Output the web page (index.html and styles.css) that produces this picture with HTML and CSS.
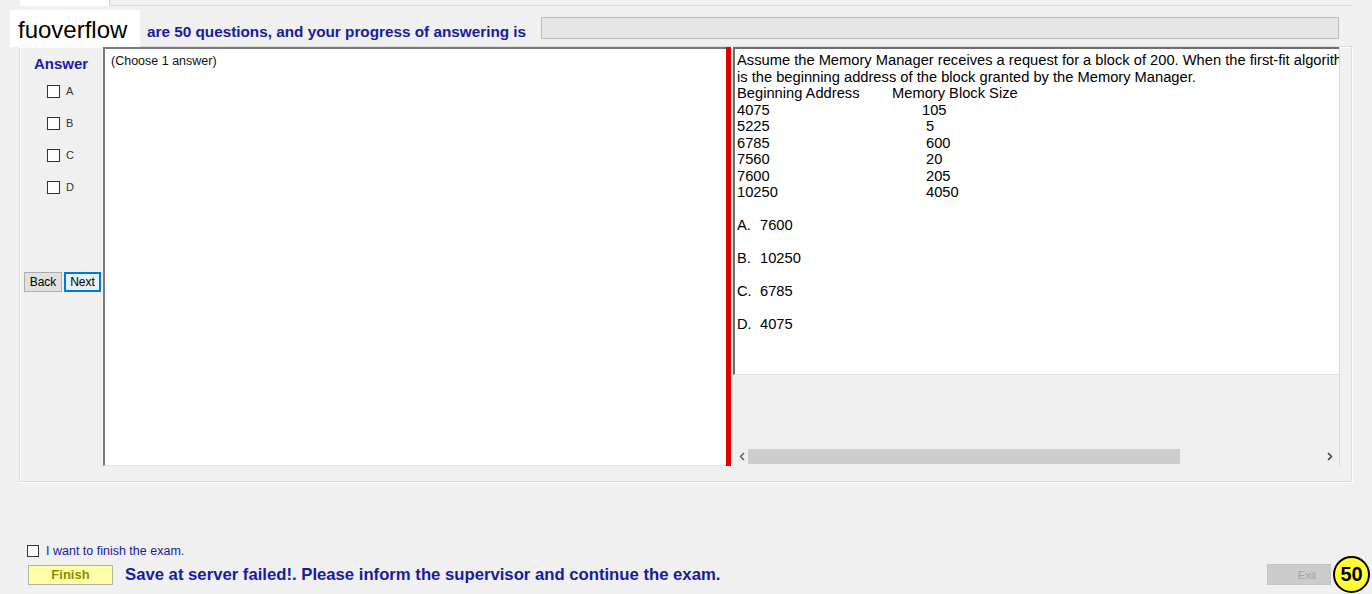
FILE: index.html
```html
<!DOCTYPE html>
<html lang="en">
<head>
  <meta charset="UTF-8">
  <title>Exam</title>
  <link rel="stylesheet" href="styles.css">
</head>
<body>
  <div class="tabstrip">
    <div class="tab"></div>
    <div class="tabline"></div>
  </div>

  <div class="logo">fuoverflow</div>

  <div class="topbar">
    <div class="heading">are 50 questions, and your progress of answering is</div>
    <div class="progress"></div>
  </div>

  <div class="group">
    <div class="answers">
      <div class="answers-title">Answer</div>
      <label class="opt"><span class="box"></span>A</label>
      <label class="opt"><span class="box"></span>B</label>
      <label class="opt"><span class="box"></span>C</label>
      <label class="opt"><span class="box"></span>D</label>
      <div class="nav">
        <button class="btn">Back</button>
        <button class="btn btn-focus">Next</button>
      </div>
    </div>

    <div class="choices">(Choose 1 answer)</div>
    <div class="divider"></div>

    <div class="question">
      <div class="qtext">
        <div class="line">Assume the Memory Manager receives a request for a block of 200. When the first-fit algorithm is used, what</div>
        <div class="line">is the beginning address of the block granted by the Memory Manager.</div>
        <div class="mem-row mem-head"><span class="addr">Beginning Address</span><span>Memory Block Size</span></div>
        <div class="mem-row"><span class="addr shift">4075</span><span>105</span></div>
        <div class="mem-row"><span class="addr">5225</span><span>5</span></div>
        <div class="mem-row"><span class="addr">6785</span><span>600</span></div>
        <div class="mem-row"><span class="addr">7560</span><span>20</span></div>
        <div class="mem-row"><span class="addr">7600</span><span>205</span></div>
        <div class="mem-row"><span class="addr">10250</span><span>4050</span></div>
        <div class="blank"></div>
        <p class="choice"><span class="letter">A.</span>7600</p>
        <p class="choice"><span class="letter">B.</span>10250</p>
        <p class="choice"><span class="letter">C.</span>6785</p>
        <p class="choice"><span class="letter">D.</span>4075</p>
      </div>
      <div class="qgap"></div>
      <div class="hscroll">
        <svg class="arrow" width="6" height="9" viewBox="0 0 6 9"><path d="M5 1 L1.5 4.5 L5 8" fill="none" stroke="#606060" stroke-width="1.5"/></svg>
        <div class="track"><div class="thumb"></div></div>
        <svg class="arrow" width="6" height="9" viewBox="0 0 6 9"><path d="M1 1 L4.5 4.5 L1 8" fill="none" stroke="#404040" stroke-width="1.5"/></svg>
      </div>
    </div>
  </div>

  <div class="footer">
    <label class="finish-check"><span class="box small"></span>I want to finish the exam.</label>
    <div class="footer-row">
      <button class="finish">Finish</button>
      <div class="message">Save at server failed!. Please inform the supervisor and continue the exam.</div>
      <button class="exit">Exit</button>
      <div class="count">50</div>
    </div>
  </div>
</body>
</html>
```

FILE: styles.css
```css
body {
  margin: 0;
  width: 1372px;
  height: 594px;
  overflow: hidden;
  position: relative;
  background-color: #f0f0f0;
  font-family: "Liberation Sans", Arial, sans-serif;
  color: #000;
}

.tabstrip {
  display: flex;
  height: 6px;
}

.tab {
  margin-left: 20px;
  width: 89px;
  background-color: #fff;
  border-right: 1px solid #d4d4d4;
}

.tabline {
  flex: 1;
  margin-right: 20px;
  border-bottom: 1px solid #dadada;
}

/* watermark over the top-left corner */
.logo {
  position: absolute;
  left: 10px;
  top: 10px;
  width: 130px;
  height: 37px;
  background-color: #fff;
  font-size: 24px;
  line-height: 40px;
  padding-left: 8px;
  box-sizing: border-box;
  color: #000;
}

.topbar {
  display: flex;
  justify-content: space-between;
  align-items: flex-start;
  height: 40px;
  padding: 11px 33px 0 147px;
  box-sizing: border-box;
}

.heading {
  font-size: 15.3px;
  font-weight: bold;
  color: #1a1a9c;
  line-height: 22px;
  padding-top: 4px;
  white-space: nowrap;
}

.progress {
  flex: 0 0 798px;
  height: 22px;
  box-sizing: border-box;
  background-color: #e6e6e6;
  border: 1px solid #bcbcbc;
}

.group {
  display: flex;
  margin: 0 20px 0 19px;
  height: 436px;
  box-sizing: border-box;
  border: 1px solid #dcdcdc;
  box-shadow: inset 1px 1px #fff, 1px 1px #fff;
  padding: 0 11px 15px 0;
}

.answers {
  width: 83px;
  flex: none;
  padding: 8px 0 0 4px;
  box-sizing: border-box;
}

.answers-title {
  font-size: 15px;
  font-weight: bold;
  color: #1a1aa8;
  line-height: 17px;
  padding-left: 10px;
  margin-bottom: 3px;
}

.opt {
  display: flex;
  align-items: center;
  height: 32px;
  padding-left: 23px;
  font-size: 11px;
  color: #333;
}

.box {
  display: inline-block;
  width: 11px;
  height: 11px;
  border: 1px solid #333;
  background-color: #fff;
  margin-right: 6px;
}

.nav {
  display: flex;
  gap: 2px;
  margin-top: 69px;
}

.btn {
  width: 38px;
  height: 20px;
  padding: 0;
  font-family: "Liberation Sans", Arial, sans-serif;
  font-size: 12px;
  color: #000;
  background-color: #e1e1e1;
  border: 1px solid #adadad;
}

.btn-focus {
  width: 37px;
  background-color: #e5f1fb;
  border: 2px solid #0078d7;
}

.choices {
  width: 623px;
  flex: none;
  box-sizing: border-box;
  background-color: #fff;
  border-top: 2px solid #7a7a7a;
  border-left: 2px solid #7a7a7a;
  border-bottom: 1px solid #e3e3e3;
  padding: 5px 0 0 6px;
  font-size: 12.5px;
  line-height: 15px;
  color: #111;
}

.divider {
  width: 5px;
  flex: none;
  background-color: #e00000;
  margin-right: 2px;
}

.question {
  flex: 1;
  display: flex;
  flex-direction: column;
  border-right: 1px solid #dadada;
  min-width: 0;
}

.qtext {
  height: 328px;
  box-sizing: border-box;
  background-color: #fff;
  border-top: 2px solid #6e6e6e;
  border-left: 2px solid #6e6e6e;
  border-bottom: 1px solid #dedede;
  padding: 3px 0 0 2px;
  font-size: 14.7px;
  line-height: 16.5px;
  white-space: nowrap;
  overflow: hidden;
}

.mem-row {
  display: flex;
}

.mem-row .addr {
  width: 189px;
}

.mem-row .shift {
  width: 185px;
}

.mem-head .addr {
  width: 155px;
}

.blank {
  height: 16.5px;
}

.choice {
  margin: 0 0 16.5px;
}

.letter {
  display: inline-block;
  width: 23px;
}

.qgap {
  flex: 1;
}

.hscroll {
  display: flex;
  align-items: center;
  height: 17px;
  margin-bottom: 1px;
  padding: 0 6px 0 6px;
  background-color: #f0f0f0;
}

.track {
  flex: 1;
  height: 15px;
  margin: 0 8px 0 3px;
}

.thumb {
  width: 432px;
  height: 15px;
  background-color: #cdcdcd;
}

.footer {
  padding: 62px 2px 0 27px;
}

.finish-check {
  display: flex;
  align-items: center;
  height: 13px;
  font-size: 12.5px;
  color: #1a1aa0;
}

.box.small {
  width: 10px;
  height: 10px;
  margin-right: 7px;
}

.footer-row {
  display: flex;
  align-items: center;
  margin-top: -1px;
}

.finish {
  margin-left: 1px;
  width: 85px;
  height: 20px;
  padding: 0;
  background-color: #ffffa8;
  border: 1px solid #b4b4a0;
  font-family: "Liberation Sans", Arial, sans-serif;
  font-size: 13px;
  font-weight: bold;
  color: #8c8c00;
}

.message {
  margin-left: 12px;
  flex: 1;
  font-size: 16.7px;
  font-weight: bold;
  color: #1a1aa0;
}

.exit {
  width: 64px;
  height: 21px;
  padding: 0 0 0 16px;
  background-color: #cccccc;
  border: 1px solid #c4c4c4;
  font-family: "Liberation Sans", Arial, sans-serif;
  font-size: 11px;
  color: #a6a6a6;
}

.count {
  width: 37px;
  height: 37px;
  margin-left: 2px;
  box-sizing: border-box;
  border: 2px solid #000;
  border-radius: 50%;
  background-color: #ffff33;
  font-size: 20px;
  font-weight: bold;
  line-height: 33px;
  text-align: center;
}
```
